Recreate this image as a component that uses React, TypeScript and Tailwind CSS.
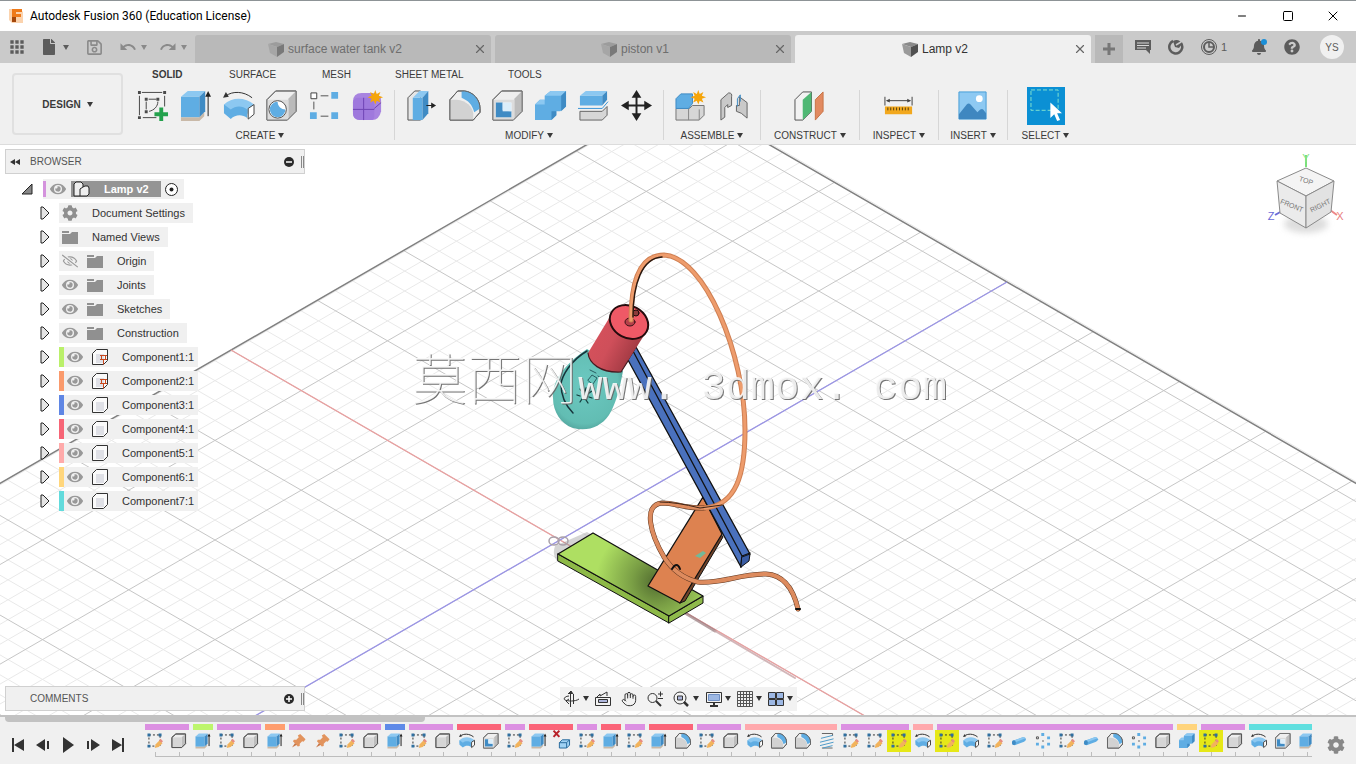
import type { ReactNode } from 'react'
import clsx from 'clsx'
import {
  FaBell,
  FaFile,
  FaFolder,
  FaCog,
  FaRegSave,
  FaQuestionCircle,
  FaEye,
  FaRegEyeSlash,
} from 'react-icons/fa'
import { MdUndo, MdRedo, MdApps } from 'react-icons/md'
import { Hand, Minus, Square, X } from 'lucide-react'

type IconName =
  | 'sketch' | 'newSketch' | 'cube' | 'extrude' | 'revolve' | 'hole' | 'pattern' | 'form'
  | 'pressPull' | 'fillet' | 'shell' | 'combine' | 'split' | 'move' | 'newComponent' | 'joint'
  | 'plane' | 'measure' | 'image' | 'select' | 'pin' | 'remove' | 'coil' | 'pipe' | 'circular'

const DARK = '#4a4a4a'
const BLUE = '#5fade3'
const STAR = 'M24 0l1.500 4 3.800-2-1.600 4 4.300 1.500-4.300 1.500 1.600 4-3.800-2L24 15l-1.500-4-3.800 2 1.600-4L16 7.500 20.300 6l-1.600-4 3.800 2z'

const shapes: Record<IconName, ReactNode> = {
  sketch: (
    <>
      <path d="M4 4h23v23H4z" fill="none" stroke="#333" strokeDasharray="2 2" />
      <path d="M1 1h6v6H1zM24 1h6v6h-6zM1 24h6v6H1z" fill="#2f6f9f" />
      <path d="M16 31l2-8 8-8 6 6-8 8z" fill="#f2b35c" />
      <path d="M25 15l3-3 5 5-3 3z" fill="#e88b83" />
    </>
  ),
  newSketch: (
    <>
      <path d="M5 2.500h21M28.500 6v11M2.500 6v20M6 28.500h14" fill="none" stroke={DARK} />
      <path d="M12 9.500h8M9.500 12v8M21.500 12c0 5-4 9-9 10" fill="none" stroke={DARK} />
      <path d="M1 1h3v3H1zM27 1h3v3h-3zM1 27h3v3H1zM8 8h3v3H8zM20 8h3v3h-3zM8 21h3v3H8z" fill={DARK} />
      <path d="M23 18h4v5h5v4h-5v5h-4v-5h-5v-4h5z" fill="#23a14c" />
    </>
  ),
  cube: (
    <>
      <path d="M2 9l8-7h20v20l-8 8H2z" fill="#ededed" stroke="#555" />
      <path d="M22 9v21l8-8V2z" fill="#bdbdbd" />
      <path d="M3 9h19v20H3z" fill="#d6d6d6" />
      <path d="M2 9l8-7h20v20l-8 8H2z" fill="none" stroke="#555" />
    </>
  ),
  extrude: (
    <>
      <path d="M1 28h19l5-5v4l-5 5H1z" fill="#c9b9a8" />
      <path d="M1 7l7-6h18l-6 6z" fill="#8cc8f1" />
      <path d="M1 7h19v21H1z" fill={BLUE} />
      <path d="M20 7l6-6v21l-6 6z" fill="#3f8bc4" />
      <path d="M29 27V4" fill="none" stroke="#222" />
      <path d="M29 1l3 6h-6z" fill="#222" />
    </>
  ),
  revolve: (
    <>
      <path d="M1 15c8-8 22-8 31 0l-7 10c-5-4-12-4-17 1l-7-5z" fill="#8cc8f1" />
      <path d="M1 15l7 5c5-4 12-4 17 0v9c-5-4-12-4-17 1l-7-6z" fill={BLUE} />
      <path d="M26 19l6-4v10l-6 5z" fill="#fff" stroke={DARK} />
      <path d="M3 6c7-5 18-5 27 2" fill="none" stroke="#333" />
      <path d="M0 8l3-6 3 5z" fill="#333" />
    </>
  ),
  hole: (
    <>
      <path d="M1 10l9-9h21v21l-9 9H1z" fill="#efefef" stroke="#555" />
      <path d="M23 9v22l8-9V1z" fill="#bababa" />
      <path d="M1 10h22v21H1z" fill="#dcdcdc" />
      <path d="M1 10l9-9h21v21l-9 9H1z" fill="none" stroke="#777" />
      <circle cx="12" cy="20" r="9" fill="#fff" stroke="#555" />
      <path d="M12 12a8 8 0 1 0 8 8c-4 0-8-3-8-8z" fill={BLUE} />
    </>
  ),
  pattern: (
    <>
      <path d="M12 6h8M5 12v8M12 27h8" fill="none" stroke="#555" />
      <path d="M2 3h6v6H2z" fill="#fff" stroke="#444" />
      <path d="M23 2h7v7h-7zM1 23h7v7H1zM23 23h7v7h-7z" fill={BLUE} />
    </>
  ),
  form: (
    <>
      <path d="M1 12q0-9 9-9h11q9 1 9 8v11q-2 9-9 9H9q-8 0-8-8z" fill="#a884e0" />
      <path d="M1 13q0-5 6-5h13q3 1 3 5v14q0 4-4 4H8q-7 0-7-7z" fill="#9f79dd" />
      <path d="M12 8v23M1 20h22M23 19l7-6" fill="none" stroke="#6f45b5" />
      <path d={STAR} fill="#f5a50a" />
    </>
  ),
  pressPull: (
    <>
      <path d="M2 8l7-7h6v30H2z" fill="#e6e6e6" stroke="#555" />
      <path d="M7 8h10v23H7z" fill={BLUE} />
      <path d="M7 8l7-7h9l-6 7z" fill="#8cc8f1" />
      <path d="M17 8l6-7v23l-6 7z" fill="#3f8bc4" />
      <path d="M21 16h8" fill="none" stroke="#222" />
      <path d="M31 16l-5-3v6z" fill="#222" />
    </>
  ),
  fillet: (
    <>
      <path d="M1 10l8-9h7c9 1 16 9 16 18v4l-7 8H1z" fill="#efefef" stroke="#555" />
      <path d="M1 10h7c10 1 16 7 17 14v7H1z" fill="#d2d2d2" />
      <path d="M13 1h4c9 1 14 9 15 18l-6 4C24 15 20 11 13 8z" fill={BLUE} />
      <path d="M1 10l8-9h7c9 1 16 9 16 18v4l-7 8H1z" fill="none" stroke="#666" />
    </>
  ),
  shell: (
    <>
      <path d="M1 10l9-9h21v21l-9 9H1z" fill="#efefef" stroke="#555" />
      <path d="M23 9v22l8-9V1z" fill="#bdbdbd" />
      <path d="M1 10h22v21H1z" fill="#dcdcdc" />
      <path d="M4 13h16v15H4z" fill="#fff" />
      <path d="M4 13h7v8l9 1v6H4z" fill="#3f8bc4" />
      <path d="M11 13h9v9h-9z" fill="#dceefa" />
      <path d="M1 10l9-9h21v21l-9 9H1z" fill="none" stroke="#777" />
    </>
  ),
  combine: (
    <>
      <path d="M0 15l5-5h5V6l6-5h16v16l-6 5h-4v4l-5 5H0z" fill={BLUE} />
      <path d="M10 6l6-5h16l-5 5zM0 15l5-5h5v5z" fill="#8cc8f1" />
      <path d="M27 6l5-5v16l-5 5zM17 22h5v4l-5 5z" fill="#3f8bc4" />
    </>
  ),
  split: (
    <>
      <path d="M2 6l6-5h22l-5 5z" fill="#8cc8f1" />
      <path d="M2 6h23v10H2z" fill={BLUE} />
      <path d="M25 6l5-5v9l-5 6z" fill="#3f8bc4" />
      <path d="M0 19h25l6-7" fill="none" stroke="#3c96d6" />
      <path d="M2 22h23l5-5v9l-5 5H2z" fill="#d6d6d6" stroke="#666" />
    </>
  ),
  move: (
    <>
      <path d="M15 7h2v8h8v2h-8v8h-2v-8H7v-2h8z" fill="#222" />
      <path d="M16 0l5 8H11zM16 32l5-8H11zM0 16l8-5v10zM32 16l-8-5v10z" fill="#222" />
    </>
  ),
  newComponent: (
    <>
      <path d="M1 19h14l3-3h12v10l-5 5H1z" fill="#d6d6d6" stroke="#777" />
      <path d="M14 19v12M25 20v11" fill="none" stroke="#888" />
      <path d="M1 9l5-5h12v10l-4 5H1z" fill={BLUE} stroke="#3f8bc4" />
      <path d={STAR} fill="#f5a50a" />
    </>
  ),
  joint: (
    <>
      <path d="M3 10l8-7q4 0 3 4v9l-4 2v-3l-3 3v10l-4 3z" fill="#c9c9c9" stroke="#666" />
      <path d="M22 7l8 6v16l-6-5-5-2v-6h3z" fill="#c9c9c9" stroke="#666" />
      <path d="M20 17V9l3-4v7" fill="none" stroke="#3f8bc4" />
    </>
  ),
  plane: (
    <>
      <path d="M1 10l8-8h9v20l-9 9H1z" fill="#f2f2f2" stroke="#555" />
      <path d="M9 10l9-8v20l-9 9z" fill="#4fb874" />
      <path d="M22 10l8-8v20l-8 9z" fill="#e28a60" stroke="#c87548" />
    </>
  ),
  measure: (
    <>
      <path d="M2 7v9M30 7v9M4 11h24" fill="none" stroke="#444" />
      <path d="M3 11l4-2v4zM29 11l-4-2v4z" fill="#444" />
      <path d="M2 17h28v8H2z" fill="#f2a81d" />
      <path d="M5 18v3M8 18v3M11 18v3M14 18v3M17 18v3M20 18v3M23 18v3M26 18v3" fill="none" stroke="#59420f" />
    </>
  ),
  image: (
    <>
      <path d="M2 2h28v28H2z" fill="#8ec9f2" stroke="#4a9fd8" />
      <path d="M2 25l8-10q2-2 4 0l7 8 3-3q2-1 3 0l3 4v6H2z" fill="#3f87c0" />
      <circle cx="23" cy="9" r="3.500" fill="#fff" />
    </>
  ),
  select: (
    <>
      <path d="M1 2h28v21H1z" fill="none" stroke="#7fe0cf" strokeDasharray="4 2" />
      <path d="M21 15v16l4-4 3 7 3-1-3-7h5z" fill="#fff" />
    </>
  ),
  pin: (
    <>
      <path d="M14 5l5-3 11 11-4 5-3-1-5 5 0 5-4 1L4 17l2-3h5l5-5z" fill="#e2935d" />
      <path d="M8 21L2 30l10-6" fill="#c87545" />
    </>
  ),
  remove: (
    <>
      <path d="M-3 -5l12 13M9 -5L-3 8" fill="none" stroke="#b8222a" strokeWidth="2" />
      <path d="M9 20l6-6h15v11l-6 6H9z" fill="#9fd2f4" stroke="#2b6c9e" />
      <path d="M9 20h15v11M24 20l6-6" fill="none" stroke="#2b6c9e" />
    </>
  ),
  coil: (
    <>
      <path d="M6 1h22v5M6 31h22" fill="none" stroke="#666" />
      <path d="M28 5L4 11M30 12L2 19M30 19L2 26M28 26L8 31" fill="none" stroke="#4f9cc9" />
    </>
  ),
  pipe: (
    <>
      <path d="M4 16l20-7q6-1 7 4 0 3-4 5L9 25q-6 1-7-4 0-3 2-5z" fill={BLUE} />
      <path d="M4 16l20-7q4-1 6 2L6 20z" fill="#8cc8f1" />
      <ellipse cx="6" cy="20" rx="4" ry="5" fill="#3f8bc4" />
    </>
  ),
  circular: (
    <>
      <path d="M13 0h6v6h-6zM13 26h6v6h-6zM25 7h6v6h-6zM25 20h6v6h-6zM2 20h6v6H2z" fill={BLUE} />
      <path d="M3 8h4v4H3z" fill="#fff" stroke="#555" />
      <path d="M15 15h3v3h-3z" fill="#777" />
    </>
  ),
}

function Icon({ name, className }: { name: IconName; className?: string }) {
  return (
    <svg
      viewBox="0 0 33 33"
      aria-hidden="true"
      className={clsx('shrink-0 overflow-visible [&_*]:[vector-effect:non-scaling-stroke]', className)}
    >
      {shapes[name]}
    </svg>
  )
}

function Caret({ className }: { className?: string }) {
  return (
    <svg viewBox="0 0 6 5" aria-hidden="true" className={clsx('h-[5px] w-1.5 shrink-0', className)}>
      <path d="M0 0h6L3 5z" fill="currentColor" />
    </svg>
  )
}

function TabCube({ className }: { className?: string }) {
  return (
    <svg viewBox="0 0 16 16" aria-hidden="true" className={clsx('h-4 w-4', className)}>
      <path d="M0 3l8-2 8 2-7 3z" fill="#8a8a8a" />
      <path d="M0 3l9 3v10l-7-4z" fill="#9a9a9a" />
      <path d="M9 6l7-3v8l-7 5z" fill="#505050" />
    </svg>
  )
}

function TitleBar() {
  return (
    <header className="flex h-[31px] shrink-0 items-center border-t border-[#8d9396] bg-white pl-2">
      <svg viewBox="0 0 16 16" aria-hidden="true" className="h-4 w-4">
        <path d="M1 1h11l3 3v11H4l-3-3z" fill="#fbd3ae" />
        <path d="M4 1h10v3H8v2h5v3H8v5H4z" fill="#ee7a1a" />
        <path d="M4 9h4v5H4z" fill="#a3470c" />
      </svg>
      <h1 className="ml-1.5 font-['Roboto','Noto_Sans',sans-serif] text-[12px] text-black">
        Autodesk Fusion 360 (Education License)
      </h1>
      <div className="ml-auto flex items-center text-black">
        <button aria-label="Minimize" className="flex w-[46px] justify-center">
          <Minus className="h-3 w-3" strokeWidth={2} />
        </button>
        <button aria-label="Maximize" className="flex w-[45px] justify-center">
          <Square className="h-3 w-3" strokeWidth={2} />
        </button>
        <button aria-label="Close" className="flex w-[46px] justify-center">
          <X className="h-4 w-4" strokeWidth={1.5} />
        </button>
      </div>
    </header>
  )
}

const documents = [
  { name: 'surface water tank v2', active: false },
  { name: 'piston v1', active: false },
  { name: 'Lamp v2', active: true },
]

function DocumentBar() {
  return (
    <div className="flex h-8 shrink-0 items-center bg-[#cacaca] text-[#5c5c5c]">
      <div className="flex w-[195px] shrink-0 items-center pl-[7px]">
        <button aria-label="Data panel"><MdApps className="h-5 w-5" /></button>
        <button aria-label="File" className="ml-[14px] flex items-center gap-1.5">
          <FaFile className="h-4 w-4" />
          <Caret />
        </button>
        <button aria-label="Save" className="ml-[17px] text-[#8a8a8a]"><FaRegSave className="h-[17px] w-[17px]" /></button>
        <button aria-label="Undo" className="ml-4 flex items-center gap-1 text-[#8a8a8a]">
          <MdUndo className="h-[18px] w-[18px]" />
          <Caret />
        </button>
        <button aria-label="Redo" className="ml-3 flex items-center gap-1 text-[#8a8a8a]">
          <MdRedo className="h-[18px] w-[18px]" />
          <Caret />
        </button>
      </div>
      <nav className="flex h-full gap-1 pt-1">
        {documents.map((doc) => (
          <div
            key={doc.name}
            className={clsx(
              'relative flex w-[296px] items-center justify-center rounded-t-[3px] text-[12px]',
              doc.active ? 'bg-[#f0f0f0] text-[#333]' : 'bg-[#b9b9b9] text-[#6e6e6e]',
            )}
          >
            <button className="flex items-center gap-1 pr-4">
              <TabCube className={doc.active ? '' : 'opacity-60'} />
              {doc.name}
            </button>
            <button aria-label={`Close ${doc.name}`} className="absolute right-1 text-[#666]">
              <X className="h-3.5 w-3.5" />
            </button>
          </div>
        ))}
        <button aria-label="New tab" className="flex w-7 items-center justify-center bg-[#b9b9b9]">
          <svg viewBox="0 0 12 12" className="h-3 w-3"><path d="M6 0v12M0 6h12" stroke="#777" strokeWidth="3" /></svg>
        </button>
      </nav>
      <div className="ml-auto flex shrink-0 items-center pr-3">
        <button aria-label="Comments">
          <svg viewBox="0 0 16 16" className="h-4 w-4">
            <path d="M0 1h16v10h-1v4l-4-4H0z" fill="#5c5c5c" />
            <path d="M2 4h12M2 6.500h12M2 9h9" stroke="#d8d8d8" />
          </svg>
        </button>
        <button aria-label="Extensions" className="ml-[17px]">
          <svg viewBox="0 0 16 16" className="h-4 w-4">
            <path d="M5 2a6.500 6.500 0 1 0 8 2" fill="none" stroke="#5c5c5c" strokeWidth="2.500" />
            <path d="M5 2q6-3 9 3l-3 4-4-1z" fill="#5c5c5c" />
            <path d="M8 6l5-3" stroke="#cacaca" strokeWidth="1.500" />
          </svg>
        </button>
        <button className="ml-[17px] flex items-center gap-1 text-[11px]">
          <svg viewBox="0 0 16 16" className="h-4 w-4" fill="none" stroke="#5c5c5c">
            <circle cx="8" cy="8" r="7.500" />
            <circle cx="8" cy="8" r="5" strokeWidth="2" />
            <path d="M8 4v4h4" strokeWidth="1.500" />
          </svg>
          1
        </button>
        <button aria-label="Notifications" className="relative ml-6">
          <FaBell className="h-4 w-4" />
          <span className="absolute top-0 right-0 h-1.5 w-1.5 rounded-full bg-[#1a8fd8]" />
        </button>
        <button aria-label="Help" className="ml-[17px]"><FaQuestionCircle className="h-4 w-4" /></button>
        <button className="ml-5 h-6 w-6 rounded-full bg-[#f0f0f0] text-[10px]">YS</button>
      </div>
    </div>
  )
}

const workspaceTabs = [
  { label: 'SOLID', className: 'w-[77px] font-bold' },
  { label: 'SURFACE', className: 'w-[93px]' },
  { label: 'MESH', className: 'w-[73px]' },
  { label: 'SHEET METAL', className: 'w-[113px]' },
  { label: 'TOOLS', className: 'w-[60px]' },
]

const groups: { label: string; className: string; icons: IconName[] }[] = [
  { label: 'CREATE', className: 'w-[268px]', icons: ['newSketch', 'extrude', 'revolve', 'hole', 'pattern', 'form'] },
  { label: 'MODIFY', className: 'w-[268px]', icons: ['pressPull', 'fillet', 'shell', 'combine', 'split', 'move'] },
  { label: 'ASSEMBLE', className: 'w-24', icons: ['newComponent', 'joint'] },
  { label: 'CONSTRUCT', className: 'w-[98px]', icons: ['plane'] },
  { label: 'INSPECT', className: 'w-[78px]', icons: ['measure'] },
  { label: 'INSERT', className: 'w-[68px]', icons: ['image'] },
  { label: 'SELECT', className: 'w-[75px]', icons: ['select'] },
]

function Ribbon() {
  return (
    <div className="flex h-[82px] shrink-0 border-b border-[#dcdcdc] bg-[#f0f0f0] text-[#3a3a3a]">
      <button className="mt-2.5 ml-3 flex h-[62px] w-[111px] shrink-0 items-center justify-center gap-1.5 rounded-[4px] border-2 border-[#e0e0e0] text-[10px] font-bold">
        DESIGN
        <Caret />
      </button>
      <div className="flex flex-col">
        <div className="flex h-[23px] items-center pl-[29px] text-[10px]">
          {workspaceTabs.map((tab) => (
            <button key={tab.label} className={clsx('text-left', tab.className)}>{tab.label}</button>
          ))}
        </div>
        <div className="flex pl-[3px]">
          {groups.map((group, i) => (
            <div key={group.label} className="flex items-center">
              {i > 0 && <span className="h-[50px] w-px bg-[#d6d6d6]" />}
              <div className={clsx('flex flex-col items-center', group.className)}>
                <div className="flex h-10 items-center gap-[11px]">
                  {group.icons.map((icon) => (
                    <button
                      key={icon}
                      aria-label={icon}
                      className={clsx(icon === 'select' && 'flex h-[38px] w-[38px] justify-center bg-[#0b90d4] pt-px')}
                    >
                      <Icon name={icon} className="h-8 w-8" />
                    </button>
                  ))}
                </div>
                <button className="flex h-[18px] items-center gap-[3px] text-[10px]">
                  {group.label}
                  <Caret />
                </button>
              </div>
            </div>
          ))}
        </div>
      </div>
    </div>
  )
}

function PanelHeader({ title, open }: { title: string; open: boolean }) {
  return (
    <div className="flex h-[25px] w-[300px] items-center border border-[#d0d0d0] bg-[#f0f0f0] text-[10px] text-[#555]">
      <span className="flex w-6 pl-1">
        {open && (
          <svg viewBox="0 0 10 6" className="h-1.5 w-2.5">
            <path d="M5 0v6L0 3zM10 0v6L5 3z" fill="#333" />
          </svg>
        )}
      </span>
      <h2 className="flex-1">{title}</h2>
      <button aria-label={`Toggle ${title}`}>
        <svg viewBox="0 0 10 10" className="h-2.5 w-2.5">
          <circle cx="5" cy="5" r="5" fill="#2a2a2a" />
          <path d={open ? 'M2 5h6' : 'M2 5h6M5 2v6'} stroke="#fff" strokeWidth="1.500" />
        </svg>
      </button>
      <span className="ml-[7px] h-3 w-[3px] border-x border-[#888]" />
    </div>
  )
}

interface TreeNode {
  label: string
  kind: 'settings' | 'folder' | 'component'
  visible?: boolean
  color?: string
  grounded?: boolean
}

const tree: TreeNode[] = [
  { label: 'Document Settings', kind: 'settings' },
  { label: 'Named Views', kind: 'folder' },
  { label: 'Origin', kind: 'folder', visible: false },
  { label: 'Joints', kind: 'folder', visible: true },
  { label: 'Sketches', kind: 'folder', visible: true },
  { label: 'Construction', kind: 'folder', visible: true },
  { label: 'Component1:1', kind: 'component', visible: true, color: 'bg-[#baf06a]', grounded: true },
  { label: 'Component2:1', kind: 'component', visible: true, color: 'bg-[#fa9a6c]', grounded: true },
  { label: 'Component3:1', kind: 'component', visible: true, color: 'bg-[#5f86e4]' },
  { label: 'Component4:1', kind: 'component', visible: true, color: 'bg-[#f76576]' },
  { label: 'Component5:1', kind: 'component', visible: true, color: 'bg-[#ffaaaa]' },
  { label: 'Component6:1', kind: 'component', visible: true, color: 'bg-[#ffd67c]' },
  { label: 'Component7:1', kind: 'component', visible: true, color: 'bg-[#62dbdc]' },
]

function FolderGlyph() {
  return (
    <svg viewBox="0 0 16 13" aria-hidden="true" className="h-[13px] w-4">
      <path d="M0 0h7v2H0zM0 3h8l2-2h6v12H0z" fill="#909090" />
    </svg>
  )
}

function ComponentGlyph({ grounded }: { grounded?: boolean }) {
  return (
    <svg viewBox="0 0 16 16" aria-hidden="true" className="h-4 w-4">
      <path d="M0.500 4.500l4-4h11v11l-4 4h-11z" fill="#fafafa" stroke="#333" />
      <path d="M4 5h8v9H4z" fill="#dfe0e6" />
      {grounded && <path d="M8 6.500h7M9.500 6.500v4h4v-4M8 10.500h7M11.500 10.500v5" fill="none" stroke="#c9481d" />}
    </svg>
  )
}

function TreeRow({ node }: { node: TreeNode }) {
  const hasEye = node.visible !== undefined
  return (
    <li className="flex h-6 items-center">
      <button aria-label={`Expand ${node.label}`} className="mr-[9px] flex w-2.5 justify-center">
        <svg viewBox="0 0 10 14" className="h-3.5 w-2.5">
          <path d="M1 1v12h2l6-6-6-6z" fill="#e4e4e4" stroke="#222" />
        </svg>
      </button>
      <div className={clsx('flex h-5 items-center bg-[#f0f0f0]', node.kind === 'component' ? 'pr-1' : 'pr-2')}>
        {node.color && <span className={clsx('h-5 w-[5px]', node.color)} />}
        {hasEye && (
          <button aria-label={`Toggle ${node.label}`} className="flex w-[22px] justify-center text-[#999]">
            {node.visible ? <FaEye className="h-4 w-4" /> : <FaRegEyeSlash className="h-4 w-4" />}
          </button>
        )}
        <span className={clsx('flex justify-center text-[#8f8f8f]', hasEye ? 'w-7' : 'w-[22px]')}>
          {node.kind === 'settings' && <FaCog className="h-4 w-4" />}
          {node.kind === 'folder' && <FolderGlyph />}
          {node.kind === 'component' && <ComponentGlyph grounded={node.grounded} />}
        </span>
        <span className={hasEye ? 'pl-2' : 'pl-[11px]'}>{node.label}</span>
      </div>
    </li>
  )
}

function Browser() {
  return (
    <section className="text-[11px] text-[#333]">
      <PanelHeader title="BROWSER" open />
      <div className="mt-[3px] flex h-6 items-center pl-4">
        <svg viewBox="0 0 12 12" className="h-3 w-3"><path d="M11 1v10H1z" fill="#888" stroke="#222" /></svg>
        <div className="ml-2.5 flex h-5 items-center bg-[#f0f0f0] pr-1.5">
          <span className="h-4 w-[3px] bg-[#d493dd]" />
          <button aria-label="Toggle Lamp v2" className="flex w-6 justify-center text-[#999]"><FaEye className="h-4 w-4" /></button>
          <div className="ml-px flex h-4 w-[90px] items-center bg-[#949494] pl-0.5 font-bold text-white">
            <svg viewBox="0 0 17 16" className="mr-[14px] h-4 w-[17px]">
              <path d="M1 3l2-2h5l2 2v3l2-1h3l1 2v6l-2 2H1z" fill="#eee" stroke="#222" />
              <path d="M7 15V8l3-2" fill="none" stroke="#222" />
            </svg>
            Lamp v2
          </div>
          <button aria-label="Activate" className="ml-1">
            <svg viewBox="0 0 13 13" className="h-[13px] w-[13px]">
              <circle cx="6.500" cy="6.500" r="6" fill="#fff" stroke="#222" />
              <circle cx="6.500" cy="6.500" r="2" fill="#222" />
            </svg>
          </button>
        </div>
      </div>
      <ul className="pl-[35px]">
        {tree.map((node) => <TreeRow key={node.label} node={node} />)}
      </ul>
    </section>
  )
}

// Ground plane: two families of parallel lines at 30 degrees, every fifth line is a major one
const SLOPE = 0.5774
const STEP = 19.92
const APEX = { x: 678, y: 92 }
const ORIGIN = { x: 560, y: 540 }

function Grid() {
  const falling = Array.from({ length: 80 }, (_, i) => i - 26)
  const rising = Array.from({ length: 80 }, (_, i) => i - 19)
  const color = (n: number) => (n % 5 === 0 ? '#c6c6c6' : '#e9e9e9')

  return (
    <g fill="none">
      {[false, true].map((major) => (
        <g key={String(major)}>
          {falling.filter((n) => (n % 5 === 0) === major).map((n) => {
            const c = ORIGIN.y - SLOPE * ORIGIN.x + n * STEP
            const x = (APEX.y + SLOPE * APEX.x - c) / (2 * SLOPE)
            return <line key={n} x1={x} y1={c + SLOPE * x} x2={1700} y2={c + SLOPE * 1700} stroke={color(n)} />
          })}
          {rising.filter((n) => (n % 5 === 0) === major).map((n) => {
            const d = ORIGIN.y + SLOPE * ORIGIN.x + n * STEP
            const x = (d - APEX.y + SLOPE * APEX.x) / (2 * SLOPE)
            return <line key={n} x1={x} y1={d - SLOPE * x} x2={-300} y2={d + SLOPE * 300} stroke={color(n)} />
          })}
        </g>
      ))}
      <path d="M-300 656.700L678 92l978 564.700" stroke="#808080" strokeWidth="1.500" />
      <path d="M231 350L1000 794" stroke="#e9a0a0" strokeWidth="1.300" />
      <path d="M1007 282L144 780" stroke="#9a94e6" strokeWidth="1.300" />
    </g>
  )
}

const CABLE_TOP = 'M631 320C631 280 640 255 664 255C705 257 745 355 745 430C745 475 736 505 705 508'
const CABLE_LOW = 'M705 508C685 509 676 503 662 503C642 505 651 535 664 557C672 570 682 578 698 582C722 584 738 574 766 574C786 575 794 592 798 609'

function Lamp() {
  return (
    <g strokeLinejoin="round" strokeLinecap="round">
      <defs>
        <radialGradient id="green" gradientUnits="userSpaceOnUse" cx="656" cy="582" r="60">
          <stop offset="0" stopColor="#526c30" />
          <stop offset="0.400" stopColor="#7a9f45" />
          <stop offset="1" stopColor="#aedf62" />
        </radialGradient>
        <linearGradient id="red" x1="0" y1="0" x2="1" y2="0.500">
          <stop offset="0" stopColor="#d9525c" />
          <stop offset="0.500" stopColor="#cf4f5a" />
          <stop offset="1" stopColor="#96343d" />
        </linearGradient>
        <radialGradient id="bulb" cx="0.450" cy="0.450" r="0.600">
          <stop offset="0" stopColor="#6cc9c1" />
          <stop offset="0.800" stopColor="#62bdb3" />
          <stop offset="1" stopColor="#4f9f98" />
        </radialGradient>
      </defs>

      {/* contact shadow and origin marker */}
      <path d="M555 546l32-14 10 6-36 26q-10-6-6-18z" fill="#888" opacity="0.350" />
      <ellipse cx="554" cy="541" rx="5" ry="4" fill="none" stroke="#a9a0aa" strokeWidth="1.500" />
      <ellipse cx="563" cy="541" rx="5" ry="4" fill="none" stroke="#a9a0aa" strokeWidth="1.500" />
      <path d="M685 613l30 18" stroke="#98797c" strokeWidth="3" opacity="0.700" />
      <path d="M715 631l80 47" stroke="#c9a5a8" strokeWidth="2" opacity="0.800" />

      <path d="M558 554l111 62v7l-111-62z" fill="#8db947" stroke="#111" />
      <path d="M669 616l34-20v7l-34 20z" fill="#8fba4b" stroke="#111" />
      <path d="M558 554l35-21 110 63-34 20z" fill="url(#green)" stroke="#111" strokeWidth="1.300" />

      <path d="M680 603l5-2 38-64-2-3z" fill="#70432a" stroke="#111" />
      <path d="M703 497l19 37-42 69-32-17z" fill="#dd8250" stroke="#111" strokeWidth="1.300" />
      <path d="M695 556l8-5 3 2-6 5z" fill="#74b898" />

      <path d="M553 398c-1-18 13-35 34-49l36 22c-4 22-8 34-14 44-8 12-22 17-36 13-12-4-20-16-20-30z" fill="url(#bulb)" />
      <path d="M587 351c-17 10-25 25-26 33 0 12 4 21 12 29" fill="none" stroke="#16333a" strokeWidth="1.500" />
      <path d="M577 395l3 1M580 389l2 3M586 388l-1 4M592 391l-3 2M592 398l-3-1M588 403l-2-3M580 402l2-3M584 395h1" stroke="#143b3b" strokeWidth="1.300" />
      <path d="M588 380l4-5 5 3-4 6zM598 376l4 3M590 370l6 3" fill="none" stroke="#2a5f62" />

      <path d="M628 360l8-13 114 207-9 13z" fill="#4a71bd" stroke="#111" strokeWidth="1.300" />
      <path d="M633 351l109 205-1 11M742 556l8-3" fill="none" stroke="#111" strokeWidth="1.300" />
      <path d="M742 557l8-3-1 7-8 6z" fill="#3a5ca3" stroke="#111" />

      <path d="M611 315l-23 38c1 10 12 20 33 19l27-43z" fill="url(#red)" />
      <path d="M588 353c1 10 12 20 33 19l7-11" fill="none" stroke="#451a20" strokeWidth="1.200" />
      <ellipse cx="629" cy="322" rx="20" ry="16" transform="rotate(28 629 322)" fill="#ef5966" stroke="#240b0d" strokeWidth="2" />
      <ellipse cx="630" cy="322" rx="5" ry="4" fill="#b5404a" stroke="#3a1216" />
      <circle cx="636" cy="313" r="3" fill="#8c3a3a" stroke="#1c0b0b" />

      <path d={CABLE_LOW} fill="none" stroke="#5e3620" strokeWidth="5" />
      <path d={CABLE_LOW} fill="none" stroke="#dd8b5e" strokeWidth="4" />
      <path d={CABLE_TOP} fill="none" stroke="#cf7f52" strokeWidth="5" />
      <path d={CABLE_TOP} fill="none" stroke="#ee9c6c" strokeWidth="3" />
      <path d="M633 317C633 284 642 258 662 257" fill="none" stroke="#2c1910" strokeWidth="1.500" />
      <path d="M660 502Q676 502 700 508L722 505" fill="none" stroke="#3d2315" />
      <path d="M672 569q5-8 8 0M796 609h4" fill="none" stroke="#111" strokeWidth="2" />
    </g>
  )
}

function ViewCube() {
  return (
    <g className="text-[8px]" fill="#777" textAnchor="middle">
      <ellipse cx="1306" cy="224" rx="22" ry="9" fill="#bbb" opacity="0.500" className="blur-[3px]" />
      <path d="M1306 167v-12" stroke="#7be07b" strokeWidth="2" />
      <path d="M1282 211l-7 4" stroke="#6b6bd8" strokeWidth="2" />
      <path d="M1330 210l7 5" stroke="#e88" strokeWidth="2" />
      <path d="M1306 168l28 13-28 15-29-15z" fill="#f4f4f4" stroke="#8a8a8a" />
      <path d="M1277 181l29 15v32l-26-15z" fill="#ebebeb" stroke="#8a8a8a" />
      <path d="M1334 181l-28 15v32l25-16z" fill="#e2e2e2" stroke="#8a8a8a" />
      <text x="1292" y="208" transform="rotate(22 1292 205)" className="text-[7px]">FRONT</text>
      <text x="1320" y="208" transform="rotate(-26 1320 205)" className="text-[7px]">RIGHT</text>
      <text x="1306" y="183" transform="rotate(18 1306 181)" className="text-[7px]">TOP</text>
      <text x="1306" y="162" fill="#8ae58a" className="text-[11px]">Y</text>
      <text x="1271" y="220" fill="#6b6bd8" className="text-[11px]">Z</text>
      <text x="1340" y="220" fill="#e98080" className="text-[11px]">X</text>
    </g>
  )
}

function Canvas() {
  return (
    <svg
      viewBox="0 145 1356 570"
      preserveAspectRatio="xMidYMid slice"
      className="absolute inset-0 h-full w-full"
      role="img"
      aria-label="Lamp v2 model"
    >
      <Grid />
      <Lamp />
      <g fill="#fafafa" fillOpacity="0.900" className="drop-shadow-[1px_1px_0_#666]">
        <text x="412" y="399" className="font-['Noto_Sans_CJK_SC',sans-serif] text-[55px] font-thin">莫西网</text>
        <text x="578" y="399" className="font-['Liberation_Mono',monospace] text-[41px]">www. 3dmox. com</text>
      </g>
      <ViewCube />
    </svg>
  )
}

function NavBar() {
  const item = 'flex items-center gap-1 text-[#333]'
  return (
    <div className="flex h-6 w-[237px] items-center bg-[#f2f2f2] pl-[3px]">
      <button aria-label="Orbit" className={item}>
        <svg viewBox="0 0 16 16" className="h-4 w-4" fill="none" stroke="#333">
          <path d="M7.500 0v16M10.500 3v10" />
          <path d="M6 5C2 5 0 8 2 9s10 2 14-1M6 13l-3-3 3-2" />
          <path d="M5 3l3-3 2 3" fill="#333" />
        </svg>
        <Caret />
      </button>
      <button aria-label="Look at" className={clsx(item, 'ml-1.5')}>
        <svg viewBox="0 0 16 16" className="h-4 w-4" fill="none" stroke="#333">
          <path d="M0.500 6.500h15v8H0.500zM2 6l3-3v2l7-4v4" />
          <path d="M3.500 8.500h9v3h-9z" fill="#aeb6dc" />
        </svg>
      </button>
      <button aria-label="Pan" className={clsx(item, 'ml-2.5')}><Hand className="h-4 w-4" strokeWidth={1.5} /></button>
      <button aria-label="Zoom" className={clsx(item, 'ml-2.5')}>
        <svg viewBox="0 0 16 16" className="h-4 w-4" fill="none" stroke="#333">
          <circle cx="5.500" cy="7" r="4.500" />
          <path d="M9 10l5 5" strokeWidth="2" />
          <path d="M11 3h5M13.500 0.500v5M11 7.500h5" />
        </svg>
      </button>
      <button aria-label="Fit" className={clsx(item, 'ml-2.5')}>
        <svg viewBox="0 0 16 16" className="h-4 w-4" fill="none" stroke="#333">
          <circle cx="7" cy="7" r="6" />
          <path d="M11 11l4 4" strokeWidth="2.500" />
          <path d="M4.500 5h5v4h-5z" fill="#aeb6dc" />
        </svg>
        <Caret />
      </button>
      <button aria-label="Display settings" className={clsx(item, 'ml-[7px] gap-[3px]')}>
        <svg viewBox="0 0 16 16" className="h-4 w-4" fill="none" stroke="#333">
          <path d="M0.500 1.500h15v10H0.500z" />
          <path d="M2.500 3.500h11v6h-11z" fill="#9db8e4" stroke="#6f8fc4" />
          <path d="M8 12v3M4 15h8" strokeWidth="2" />
        </svg>
        <Caret />
      </button>
      <button aria-label="Grid" className={clsx(item, 'ml-1.5 gap-[3px]')}>
        <svg viewBox="0 0 16 16" className="h-4 w-4" fill="none" stroke="#555">
          <path d="M0.500 0.500h15v15H0.500zM3.500 0v16M6.500 0v16M9.500 0v16M12.500 0v16M0 3.500h16M0 6.500h16M0 9.500h16M0 12.500h16" />
        </svg>
        <Caret />
      </button>
      <button aria-label="Viewports" className={clsx(item, 'ml-1.5 gap-[3px]')}>
        <svg viewBox="0 0 16 16" className="h-4 w-4" fill="#9db8e4" stroke="#333">
          <path d="M0.500 1.500h7v6h-7zM8.500 1.500h7v6h-7zM0.500 8.500h7v6h-7zM8.500 8.500h7v6h-7z" />
        </svg>
        <Caret />
      </button>
    </div>
  )
}

const PURPLE = 'bg-[#dc90e2]'
const RED = 'bg-[#fb6478]'
const PINK = 'bg-[#ffa9ad]'

type TimelineIcon = IconName | 'active'

const timeline: { color: string; icons: TimelineIcon[] }[] = [
  { color: PURPLE, icons: ['sketch', 'cube'] },
  { color: 'bg-[#bdf56c]', icons: ['extrude'] },
  { color: PURPLE, icons: ['sketch', 'cube'] },
  { color: 'bg-[#ff9d6e]', icons: ['extrude'] },
  { color: PURPLE, icons: ['pin', 'pin', 'sketch', 'cube'] },
  { color: 'bg-[#5f8ae8]', icons: ['extrude'] },
  { color: PURPLE, icons: ['sketch', 'cube'] },
  { color: RED, icons: ['revolve', 'shell'] },
  { color: PURPLE, icons: ['sketch'] },
  { color: RED, icons: ['extrude', 'remove'] },
  { color: PURPLE, icons: ['sketch'] },
  { color: RED, icons: ['extrude'] },
  { color: PURPLE, icons: ['sketch'] },
  { color: RED, icons: ['extrude', 'fillet'] },
  { color: PURPLE, icons: ['sketch', 'cube'] },
  { color: PINK, icons: ['revolve', 'fillet', 'fillet', 'coil'] },
  { color: PURPLE, icons: ['sketch', 'sketch', 'active'] },
  { color: PINK, icons: ['revolve'] },
  {
    color: PURPLE,
    icons: ['active', 'revolve', 'sketch', 'pipe', 'circular', 'sketch', 'pipe', 'fillet', 'circular', 'cube'],
  },
  { color: 'bg-[#ffd47c]', icons: ['combine'] },
  { color: PURPLE, icons: ['active', 'cube'] },
  { color: 'bg-[#60dfdf]', icons: ['revolve', 'shell', 'extrude'] },
]

const playback = [
  { label: 'First', d: 'M2 1h2v14H2zM14 2v12L4 8z' },
  { label: 'Step back', d: 'M10 2v12L1 8zM12 4h2v8h-2z' },
  { label: 'Play', d: 'M3 0v16l11-8z' },
  { label: 'Step forward', d: 'M6 2v12l9-6zM2 4h2v8H2z' },
  { label: 'Last', d: 'M12 1h2v14h-2zM2 2v12l10-6z' },
]

function Timeline() {
  return (
    <footer className="h-[49px] shrink-0 border-t-2 border-[#c2c2c2] bg-[#f0f0f0]">
      <div className="ml-[5px] h-[5px] w-[420px] rounded-b-sm bg-[#c2c2c2]" />
      <div className="flex h-[42px] items-start">
        <div className="flex w-[143px] shrink-0 items-center gap-[9px] pt-[15px] pl-2.5">
          {playback.map((control) => (
            <button key={control.label} aria-label={control.label}>
              <svg viewBox="0 0 16 16" className="h-4 w-4"><path d={control.d} fill="#333" /></svg>
            </button>
          ))}
        </div>
        <div className="flex min-w-0 flex-1 overflow-hidden pt-0.5">
          {timeline.map((group, i) => (
            <div key={i} className="shrink-0">
              <div className={clsx('mx-0.5 h-1.5', group.color)} />
              <div className="flex">
                {group.icons.map((icon, j) => (
                  <div key={j} className="w-6">
                    <button
                      aria-label={icon}
                      className={clsx(
                        'flex h-[22px] w-6 items-center justify-center',
                        icon === 'active' && 'bg-[#e6e818]',
                      )}
                    >
                      <Icon name={icon === 'active' ? 'sketch' : icon} className="h-4 w-4" />
                    </button>
                    <div className="flex h-[5px] justify-end">
                      {(i > 0 || j > 0) && <span className="w-3 border-b border-[#bdbdbd]" />}
                      <span className="w-3 border-b border-l border-[#bdbdbd]" />
                    </div>
                  </div>
                ))}
              </div>
            </div>
          ))}
        </div>
        <button aria-label="Timeline settings" className="mt-3.5 mr-[11px] ml-[15px] shrink-0 text-[#888]">
          <FaCog className="h-[18px] w-[18px]" />
        </button>
      </div>
    </footer>
  )
}

export default function App() {
  return (
    <div className="flex h-screen flex-col overflow-hidden bg-white font-['Liberation_Sans',Arial,sans-serif]">
      <TitleBar />
      <DocumentBar />
      <Ribbon />
      <main className="relative min-h-0 flex-1 overflow-hidden">
        <Canvas />
        <div className="relative flex h-full flex-col justify-between pt-1 pl-[5px]">
          <Browser />
          <div className="flex items-center pb-1">
            <div className="w-[555px]"><PanelHeader title="COMMENTS" open={false} /></div>
            <NavBar />
          </div>
        </div>
      </main>
      <Timeline />
    </div>
  )
}
